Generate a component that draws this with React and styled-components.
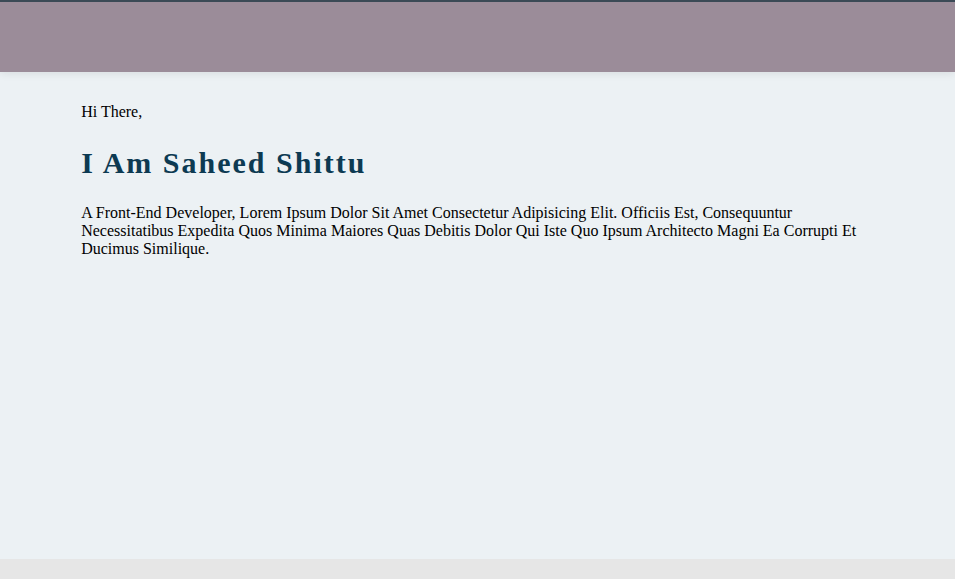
import React from "react";
import styled, { createGlobalStyle } from "styled-components";

const Global = createGlobalStyle`
  html, body { margin: 0; padding: 0; }
  body {
    background: #e6e6e6;
    font-family: "Liberation Serif", "Times New Roman", serif;
    color: #000;
  }
`;

const Header = styled.header`
  height: 70px;
  background: #9b8c99;
  border-top: 2px solid #3b4a56;
  position: relative;
  z-index: 1;
  box-shadow: 0 2px 8px rgba(0, 0, 0, 0.08);
`;

const Main = styled.main`
  height: 487px;
  background: #ecf1f4;
  padding-top: 31px;
  box-sizing: border-box;
`;

const Container = styled.section`
  width: 83%;
  margin: 0 auto;
`;

const Greeting = styled.p`
  margin: 0;
  font-size: 16px;
`;

const Title = styled.h1`
  font-size: 30px;
  font-weight: bold;
  letter-spacing: 2px;
  color: #0d3a52;
  margin: 25px 0 24px;
`;

const Intro = styled.p`
  font-size: 16px;
  margin: 16px 0;
`;

export default function App() {
  return (
    <>
      <Global />
      <Header />
      <Main>
        <Container>
          <Greeting>Hi There,</Greeting>
          <Title>I Am Saheed Shittu</Title>
          <Intro>
            A Front-End Developer, Lorem Ipsum Dolor Sit Amet Consectetur Adipisicing Elit. Officiis Est, Consequuntur
            Necessitatibus Expedita Quos Minima Maiores Quas Debitis Dolor Qui Iste Quo Ipsum Architecto Magni Ea Corrupti Et
            Ducimus Similique.
          </Intro>
        </Container>
      </Main>
    </>
  );
}
